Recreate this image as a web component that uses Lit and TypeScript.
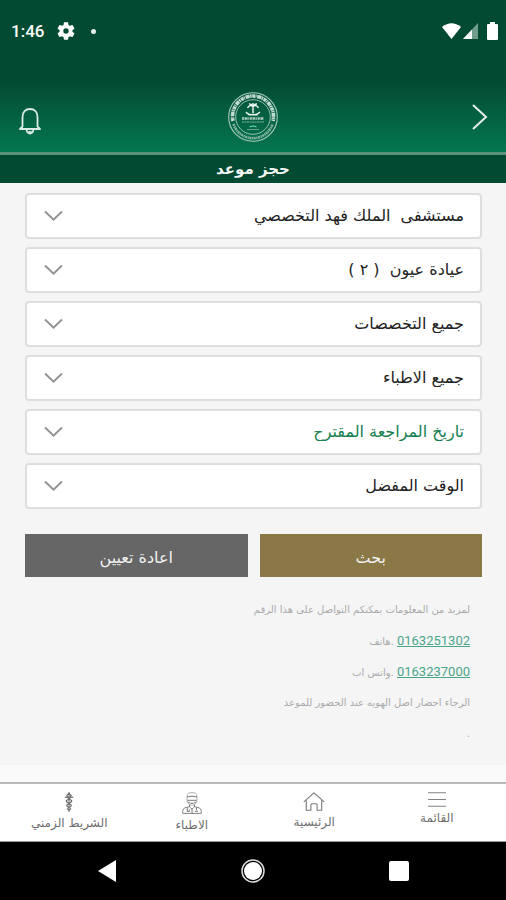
import { LitElement, html, css, svg } from "lit";
import { customElement } from "lit/decorators.js";
import { classMap } from "lit/directives/class-map.js";

interface Field {
  id: string;
  value: string;
  accent?: boolean;
}

const FIELDS: Field[] = [
  { id: "hospital", value: "مستشفى\u00a0 الملك فهد التخصصي" },
  { id: "clinic", value: "عيادة عيون\u00a0 ( ٢ )" },
  { id: "specialty", value: "جميع التخصصات" },
  { id: "doctor", value: "جميع الاطباء" },
  { id: "date", value: "تاريخ المراجعة المقترح", accent: true },
  { id: "time", value: "الوقت المفضل" },
];

const menuIcon = svg`<svg width="18" height="15" viewBox="0 0 18 15" aria-hidden="true">
  <path d="M0 .8h18M0 7.5h18M0 14.2h18" fill="none" stroke="#828282" stroke-width="1.1"/></svg>`;

const homeIcon = svg`<svg width="22" height="19" viewBox="0 0 22 19" aria-hidden="true">
  <path d="M.8 9.8 11 .9l10.2 8.9M3.3 8.2v10h4.6v-5.400q0-1 1-1h4.200q1 0 1 1v5.400h4.600v-10" fill="none" stroke="#7a7a7a" stroke-width="1.100" stroke-linejoin="round"/></svg>`;

const doctorIcon = svg`<svg width="20" height="22" viewBox="0 0 20 22" aria-hidden="true">
  <g fill="none" stroke="#858585" stroke-width="1">
    <path d="M5 4.500C5 1.500 7 .6 10 .6s5 .9 5 3.900v3.500c0 3-2.200 5.400-5 5.400S5 11 5 8z" stroke="#b4b4b4"/>
    <path d="M5 5q5-1.800 10 0M5.400 8.300h9.200M6 10l2.500 1.400h3L14 10" stroke="#777"/>
    <path d="M7.500 13v2L10 17l2.500-2v-2M7.500 14.600 3 15.800Q.7 16.600.7 19v2.400h18.600V19q0-2.400-2.300-3.200l-4.500-1.200"/>
    <path d="M5.300 15.500v4h2v-2M14.500 15.500v2.500M13 19.300h3M10 17v4.400" stroke="#777"/>
  </g></svg>`;

const timelineIcon = svg`<svg width="10" height="20" viewBox="0 0 10 20" aria-hidden="true">
  <g fill="none" stroke="#6c6c6c" stroke-width="1.200">
    <path d="M5 0v20" stroke-width="1"/>
    <path d="M5 1.400 7.200 3.600 5 6 2.800 3.600z"/>
    <path d="M.8 5.500Q2.300 4.200 5 6.500q2.700-2.300 4.200-1M5 7.300C8.800 8 8.500 10.300 5 11c-3.500-.7-3.800-3 0-3.700M5 11.800c3 .6 3 2.800 0 3.600-3-.8-3-3 0-3.600M3 16.500l2 1.500 2-1.500"/>
  </g></svg>`;

const NAV = [
  { label: "القائمة", icon: menuIcon },
  { label: "الرئيسية", icon: homeIcon },
  { label: "الاطباء", icon: doctorIcon },
  { label: "الشريط الزمني", icon: timelineIcon },
];

const emblem = svg`<svg width="52" height="52" viewBox="0 0 52 52" role="img" aria-label="الشعار">
  <g fill="none" stroke="#a9cbbb">
    <circle cx="26" cy="26" r="24.300" stroke-width="1.100"/>
    <circle cx="26" cy="26" r="17.300" stroke-width=".9"/>
    <path d="M6 30A20.500 20.500 0 1 1 46 30" stroke="#c3dbd0" stroke-width="3.600" stroke-dasharray="3 .5 1 .7 4 .5 1.600 .6"/>
    <path d="M6.500 33A20.500 20.500 0 0 0 45.500 33" stroke="#86b5a1" stroke-width="2.600" stroke-dasharray="2 .6 1.300 .5"/>
    <path d="M19 21q3 4 12 2.500M33 21q-3 4-12 2.500" stroke="#e7f2ec" stroke-width="1.300"/>
    <path d="M26 22.500v-7M26 15.500q-3.500-2.500-5.500 1.500M26 15.500q3.500-2.500 5.500 1.500M26 15.500q-2-3-4-2.300M26 15.500q2-3 4-2.300M26 15.500V12" stroke="#f1f8f4" stroke-width="1.400"/>
    <path d="M15 27.500h22" stroke="#a9cbbb" stroke-width="2.400" stroke-dasharray="2 .6 3 .7 1 .6"/>
    <path d="M15 31h22" stroke="#7fb19b" stroke-width="1" stroke-dasharray="2 .5"/>
    <path d="M22.500 36q3.500-1.700 7 0" stroke="#5fd0a4" stroke-width="1.200"/>
    <path d="M20 38.500h12" stroke="#7fb19b" stroke-width=".8"/>
  </g></svg>`;

@customElement("app-root")
export class AppRoot extends LitElement {
  static styles = css`
    :host {
      display: flex;
      flex-direction: column;
      min-height: 100vh;
      direction: rtl;
      background: #fafafa;
      color: #222;
      font-family: "DejaVu Sans", "Noto Sans", sans-serif;
      font-size: 12px;
    }
    * {
      box-sizing: border-box;
    }
    svg {
      display: block;
      flex: none;
    }
    button {
      border: 0;
      padding: 0;
      background: none;
      color: inherit;
      font: inherit;
      cursor: pointer;
    }
    .header {
      background: linear-gradient(#034a33 0, #034a33 80px, #047650 152px);
      border-bottom: 3px solid #5d917a;
      color: #fff;
    }
    .status {
      display: flex;
      direction: ltr;
      align-items: center;
      height: 62px;
      padding: 0 8px 0 11px;
    }
    .clock {
      font: 500 17px/20px Roboto, sans-serif;
      margin-right: 13px;
    }
    .dot {
      width: 5px;
      height: 5px;
      margin-left: 16px;
      border-radius: 50%;
      background: #e4efe9;
    }
    .signals {
      display: flex;
      align-items: center;
      gap: 2px;
      margin-left: auto;
    }
    .battery {
      margin-left: 7px;
    }
    .toolbar {
      display: grid;
      grid-template-columns: 1fr auto 1fr;
      align-items: center;
      height: 90px;
      padding: 19px 18px 0;
    }
    .bell {
      justify-self: end;
      padding-top: 8px;
    }
    .back {
      justify-self: start;
    }
    .title {
      margin: 0;
      background: #034a33;
      color: #f3f7f5;
      font-size: 15px;
      font-weight: 700;
      line-height: 28px;
      text-align: center;
    }
    .main {
      flex: 1;
    }
    .panel {
      padding: 10px 24px 16px 25px;
      background: #f5f5f5;
    }
    .fields {
      display: grid;
      gap: 8px;
    }
    .field {
      position: relative;
    }
    .select {
      display: block;
      width: 100%;
      height: 46px;
      padding: 0 16px 2px 48px;
      border: 2px solid #dedede;
      border-radius: 4px;
      appearance: none;
      background: #fff;
      color: #222;
      direction: rtl;
      font: inherit;
      font-size: 16px;
    }
    .accent {
      color: #168052;
    }
    .chevron {
      position: absolute;
      left: 19px;
      top: 17px;
      pointer-events: none;
    }
    .actions {
      display: grid;
      grid-template-columns: 1fr 1fr;
      gap: 12px;
      margin-top: 25px;
    }
    .action {
      height: 43px;
      padding-top: 4px;
      background: #666;
      color: #f1f1f1;
      font-size: 16px;
    }
    .primary {
      background: #8a7946;
    }
    .info {
      padding: 17px 12px 0;
      color: #aaa;
      font-size: 10px;
      line-height: 31px;
    }
    .info p {
      height: 31px;
      margin: 0;
    }
    .link {
      color: #4ba589;
      font-family: Roboto, sans-serif;
      font-size: 13px;
    }
    .nav {
      display: grid;
      grid-template-columns: repeat(4, 1fr);
      height: 60px;
      padding: 0 8px;
      border-top: 2px solid #b9b9b9;
      border-bottom: 1px solid #999;
      background: #fff;
    }
    .tab {
      display: flex;
      flex-direction: column;
      align-items: center;
      gap: 3px;
      padding-top: 8px;
      color: #6e6e6e;
      font-size: 12px;
      line-height: 16px;
    }
    .system {
      display: grid;
      direction: ltr;
      grid-template-columns: repeat(3, 146px);
      justify-content: center;
      height: 58px;
      background: #000;
    }
    .key {
      display: grid;
      place-items: center;
    }
  `;

  private renderField(f: Field) {
    return html`<div class="field">
      <select id=${f.id} aria-label=${f.value} class=${classMap({ select: true, accent: !!f.accent })}>
        <option>${f.value}</option>
      </select>
      <svg class="chevron" width="19" height="12" viewBox="0 0 19 12" aria-hidden="true">
        <path d="M1 1.500 9.500 9.700 18 1.500" fill="none" stroke="#929292" stroke-width="1.900" />
      </svg>
    </div>`;
  }

  render() {
    return html`
      <header class="header">
        <div class="status">
          <span class="clock">1:46</span>
          <svg width="18" height="18" viewBox="2 2 20 20" aria-hidden="true">
            <path fill="#fff" d="M19.140 12.940c.04-.3.06-.61.06-.94s-.02-.64-.07-.94l2.030-1.580a.49.49 0 0 0 .12-.61l-1.920-3.320a.488.488 0 0 0-.59-.22l-2.390.96c-.5-.38-1.030-.7-1.620-.94l-.36-2.540a.484.484 0 0 0-.48-.41h-3.840c-.24 0-.43.17-.47.41l-.36 2.540c-.59.24-1.130.57-1.620.94l-2.390-.96a.48.48 0 0 0-.59.22L2.740 8.870c-.12.21-.08.47.12.61l2.030 1.580c-.05.3-.09.63-.09.94s.02.64.07.94l-2.030 1.580a.49.49 0 0 0-.12.61l1.920 3.320c.12.22.37.29.59.22l2.390-.96c.5.38 1.030.7 1.620.94l.36 2.540c.05.24.24.41.48.41h3.840c.24 0 .44-.17.47-.41l.36-2.540c.59-.24 1.130-.56 1.620-.94l2.390.96c.22.08.47 0 .59-.22l1.920-3.320a.48.48 0 0 0-.12-.61zM12 15a3 3 0 1 1 0-6 3 3 0 0 1 0 6z"/>
          </svg>
          <span class="dot"></span>
          <div class="signals">
            <svg width="19" height="16" viewBox="0 0 19 16" aria-hidden="true">
              <path d="M0 4Q9.500-3.500 19 4L9.500 16z" fill="#fff" />
            </svg>
            <svg width="15" height="16" viewBox="0 0 15 16" aria-hidden="true">
              <path d="M15 0v16H0z" fill="#6f9c8b" />
              <path d="M9 6.400V16H0z" fill="#fff" />
            </svg>
            <svg class="battery" width="11" height="18" viewBox="0 0 11 18" aria-hidden="true">
              <path d="M3 0h5v2h2q1 0 1 1v14q0 1-1 1H1q-1 0-1-1V3q0-1 1-1h2z" fill="#fff" />
            </svg>
          </div>
        </div>
        <div class="toolbar">
          <button class="back" aria-label="رجوع">
            <svg width="17" height="28" viewBox="0 0 17 28">
              <path d="M2 2 15 14 2 26" fill="none" stroke="#e6f0eb" stroke-width="2" />
            </svg>
          </button>
          ${emblem}
          <button class="bell" aria-label="التنبيهات">
            <svg width="24" height="28" viewBox="0 0 24 28">
              <g fill="none" stroke="#dcebe4" stroke-width="1.800" stroke-linejoin="round">
                <path d="M4.500 19.500V10C4.500 5 7.500 2 12 2s7.500 3 7.500 8v9.500l2.500 2.500h-20z" />
                <path d="M8.500 22.500q.5 4 3.500 4t3.500-4" />
                <path d="M10.200 25h3.600" />
              </g>
            </svg>
          </button>
        </div>
      </header>
      <h1 class="title">حجز موعد</h1>
      <main class="main">
        <div class="panel">
          <div class="fields">${FIELDS.map((f) => this.renderField(f))}</div>
          <div class="actions">
            <button class="action primary">بحث</button>
            <button class="action">اعادة تعيين</button>
          </div>
          <div class="info">
            <p>لمزيد من المعلومات يمكنكم التواصل على هذا الرقم</p>
            <p><a class="link" href="tel:0163251302">0163251302</a> .هاتف</p>
            <p><a class="link" href="tel:0163237000">0163237000</a> .واتس اب</p>
            <p>الرجاء احضار اصل الهويه عند الحضور للموعد</p>
            <p>.</p>
          </div>
        </div>
      </main>
      <nav class="nav">
        ${NAV.map((n) => html`<button class="tab">${n.icon}<span>${n.label}</span></button>`)}
      </nav>
      <div class="system">
        <button class="key" aria-label="Back">
          <svg width="18" height="22" viewBox="0 0 18 22"><path d="M18 0v22L0 11z" fill="#fff" /></svg>
        </button>
        <button class="key" aria-label="Home">
          <svg width="24" height="24" viewBox="0 0 24 24">
            <circle cx="12" cy="12" r="11" fill="none" stroke="#ddd" stroke-width="1.500" />
            <circle cx="12" cy="12" r="9" fill="#fff" />
          </svg>
        </button>
        <button class="key" aria-label="Recents">
          <svg width="20" height="20" viewBox="0 0 20 20"><rect width="20" height="20" rx="2" fill="#fff" /></svg>
        </button>
      </div>
    `;
  }
}
